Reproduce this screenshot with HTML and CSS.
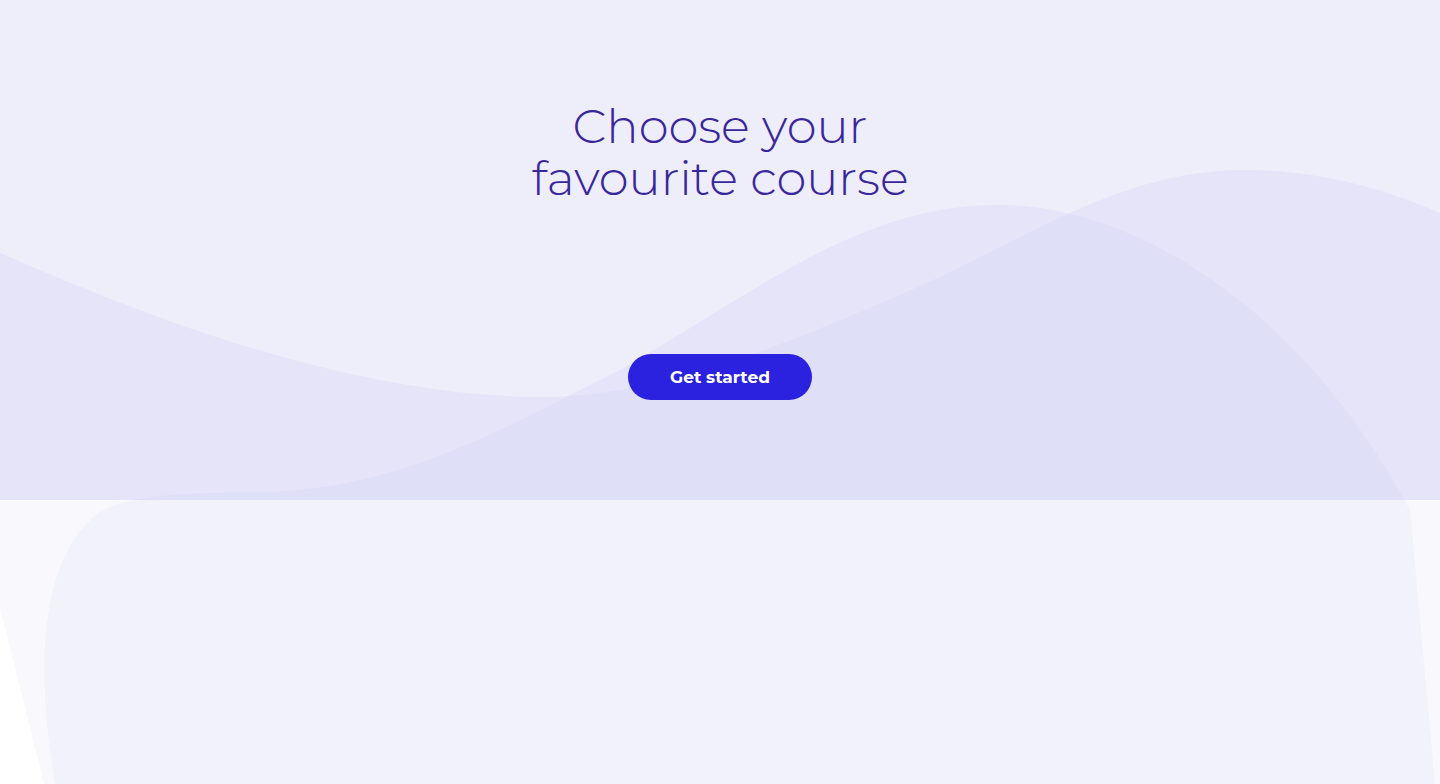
FILE: index.html
```html
<!DOCTYPE html>
<html lang="en">
<head>
<meta charset="utf-8">
<title>Choose your favourite course</title>
<link rel="stylesheet" href="styles.css">
</head>
<body>
<div class="page">
  <svg class="backdrop" width="1440" height="784" viewBox="0 0 1440 784" aria-hidden="true">
    <defs>
      <clipPath id="clipTop"><rect x="0" y="0" width="1440" height="500"/></clipPath>
      <clipPath id="clipBottom"><rect x="0" y="500" width="1440" height="284"/></clipPath>
      <path id="waveA" d="M0,253 C120,305 330,393 530,397 C650,399 760,355 900,295 C1030,239 1120,168 1251,170 C1330,171 1400,195 1440,213 L1440,784 L44,784 L0,607 Z"/>
      <path id="waveB" d="M55,784 C38,680 36,570 92,518 C118,496 170,493 260,492 C400,490 500,430 620,370 C760,290 860,205 999,205 C1120,205 1290,290 1410,510 L1435,784 Z"/>
    </defs>
    <rect x="0" y="0" width="1440" height="500" fill="#eeedfa"/>
    <rect x="0" y="500" width="1440" height="284" fill="#ffffff"/>
    <g clip-path="url(#clipTop)" fill="rgb(214,215,248)" fill-opacity="0.4">
      <use href="#waveA"/>
      <use href="#waveB"/>
    </g>
    <g clip-path="url(#clipBottom)" fill="rgb(206,206,241)" fill-opacity="0.14">
      <use href="#waveA"/>
      <use href="#waveB"/>
    </g>
  </svg>

  <section class="hero">
    <h1 class="hero-title">Choose your<br>favourite course</h1>
    <a class="btn-primary" href="#">Get started</a>
  </section>
  <section class="lower"></section>
</div>
</body>
</html>
```

FILE: styles.css
```css
html, body {
  margin: 0;
  padding: 0;
}

body {
  width: 1440px;
  height: 784px;
  overflow: hidden;
  background: #ffffff;
  font-family: "Montserrat", "Open Sans", "Liberation Sans", sans-serif;
}

.page {
  position: relative;
  width: 1440px;
  height: 784px;
}

.backdrop {
  position: absolute;
  left: 0;
  top: 0;
  z-index: 0;
  display: block;
}

.hero {
  position: relative;
  z-index: 1;
  height: 500px;
  display: flex;
  flex-direction: column;
  align-items: center;
  box-sizing: border-box;
  padding-top: 100px;
}

.hero-title {
  margin: 0;
  font-size: 48px;
  line-height: 52px;
  font-weight: 300;
  color: #38279a;
  text-align: center;
}

.btn-primary {
  margin-top: 150px;
  width: 184px;
  height: 46px;
  border-radius: 23px;
  background: #2a22df;
  color: #ffffff;
  font-size: 17px;
  font-weight: 700;
  text-decoration: none;
  display: flex;
  align-items: center;
  justify-content: center;
}

.lower {
  position: relative;
  z-index: 1;
  height: 284px;
}
```
